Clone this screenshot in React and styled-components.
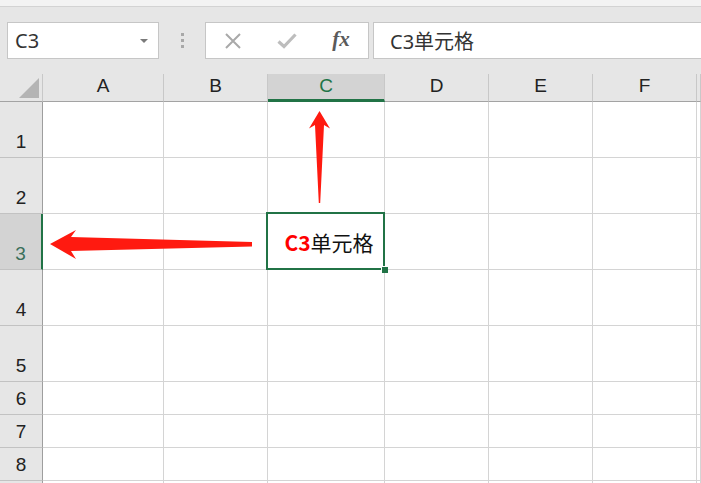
import React from 'react'
import styled, { createGlobalStyle, css } from 'styled-components'

const GlobalStyle = createGlobalStyle`
  html, body {
    margin: 0;
    padding: 0;
    background: #ffffff;
    overflow: hidden;
  }
  body {
    font-family: "Liberation Sans", "Noto Sans CJK SC", sans-serif;
  }
`

const Page = styled.div`
  position: relative;
  width: 701px;
  height: 483px;
  overflow: hidden;
  background: #ffffff;
`

const RibbonEdge = styled.div`
  height: 6px;
  background: #f3f3f3;
  border-bottom: 1px solid #d3d3d3;
`

const Toolbar = styled.div`
  display: flex;
  align-items: center;
  height: 67px;
  padding-left: 7px;
  background: #e6e6e6;
  box-sizing: border-box;
`

const boxStyle = css`
  height: 37px;
  box-sizing: border-box;
  background: #ffffff;
  border: 1px solid #c6c6c6;
  display: flex;
  align-items: center;
`

const NameBox = styled.div`
  ${boxStyle}
  width: 152px;
  padding: 0 10px 0 7px;
  justify-content: space-between;
  font-size: 20px;
  color: #333333;
  font-family: "Noto Sans", "Liberation Sans", sans-serif;
`

const Caret = styled.span`
  width: 0;
  height: 0;
  border-left: 4px solid transparent;
  border-right: 4px solid transparent;
  border-top: 4px solid #7a7a7a;
`

const Grip = styled.div`
  width: 46px;
  display: flex;
  flex-direction: column;
  align-items: center;
  gap: 3px;
  span {
    width: 3px;
    height: 3px;
    background: #a8a8a8;
  }
`

const ButtonsBox = styled.div`
  ${boxStyle}
  width: 164px;
  display: grid;
  grid-template-columns: repeat(3, 1fr);
  place-items: center;
`

const Fx = styled.span`
  font-family: "Liberation Serif", serif;
  font-style: italic;
  font-weight: bold;
  font-size: 21px;
  color: #5a5a5a;
  margin-top: -3px;
`

const FormulaBar = styled.div`
  ${boxStyle}
  flex: 1;
  margin-left: 4px;
  margin-right: -4px;
  padding-left: 16px;
  font-size: 20px;
  color: #333333;
  font-family: "Noto Sans", "Noto Sans CJK SC", sans-serif;
`

const Sheet = styled.div`
  display: grid;
  grid-template-columns: 43px 121px 104px 117px 104px 104px 104px 1fr;
  grid-template-rows: 28px repeat(5, 56px) repeat(4, 33px);
`

const Corner = styled.div`
  background: #e6e6e6;
  border-right: 1px solid #c8c8c8;
  border-bottom: 1px solid #a3a3a3;
  box-sizing: border-box;
  position: relative;
  &::after {
    content: '';
    position: absolute;
    right: 3px;
    bottom: 3px;
    width: 0;
    height: 0;
    border-left: 20px solid transparent;
    border-bottom: 20px solid #b4b4b4;
  }
`

const ColHead = styled.div`
  box-sizing: border-box;
  background: ${p => (p.$active ? '#d3d3d3' : '#e6e6e6')};
  border-right: 1px solid #c8c8c8;
  border-bottom: ${p => (p.$active ? '3px solid #217346' : '1px solid #a3a3a3')};
  color: ${p => (p.$active ? '#217346' : '#222222')};
  font-size: 19px;
  display: flex;
  justify-content: center;
  align-items: flex-end;
  padding-bottom: ${p => (p.$active ? '2px' : '4px')};
`

const RowHead = styled.div`
  box-sizing: border-box;
  background: ${p => (p.$active ? '#d3d3d3' : '#e6e6e6')};
  border-right: ${p => (p.$active ? '2px solid #217346' : '1px solid #9e9e9e')};
  border-bottom: 1px solid #c2c2c2;
  color: ${p => (p.$active ? '#3a6f5a' : '#222222')};
  font-size: 19px;
  display: flex;
  justify-content: center;
  align-items: flex-end;
  padding-bottom: 4px;
`

const Cell = styled.div`
  box-sizing: border-box;
  border-right: 1px solid #d4d4d4;
  border-bottom: 1px solid #d4d4d4;
  background: #ffffff;
  position: relative;
  ${p =>
    p.$selected &&
    css`
      z-index: 1;
      display: flex;
      align-items: center;
      justify-content: center;
      padding-left: 6px;
      padding-top: 1px;
      font-family: "Noto Sans CJK SC", "Noto Sans", sans-serif;
      font-size: 21px;
      color: #111111;
      &::before {
        content: '';
        position: absolute;
        left: -2px;
        top: -2px;
        right: -1px;
        bottom: -1px;
        border: 2px solid #217346;
        pointer-events: none;
      }
      &::after {
        content: '';
        position: absolute;
        right: -4px;
        bottom: -4px;
        width: 6px;
        height: 6px;
        background: #217346;
        border-left: 1px solid #ffffff;
        border-top: 1px solid #ffffff;
      }
    `}
`

const Red = styled.b`
  color: #ff0000;
  font-weight: bold;
`

const Arrows = styled.svg`
  position: absolute;
  left: 0;
  top: 0;
  z-index: 2;
  pointer-events: none;
`

const columns = ['A', 'B', 'C', 'D', 'E', 'F', 'G']
const rows = [1, 2, 3, 4, 5, 6, 7, 8, 9]

const App = () => {
  return (
    <Page>
      <GlobalStyle />
      <RibbonEdge />
      <Toolbar>
        <NameBox>
          <span>C3</span>
          <Caret />
        </NameBox>
        <Grip>
          <span />
          <span />
          <span />
        </Grip>
        <ButtonsBox>
          <svg width="18" height="18" viewBox="0 0 18 18">
            <path d="M2 2 L16 16 M16 2 L2 16" stroke="#a9a9a9" strokeWidth="2" fill="none" />
          </svg>
          <svg width="20" height="16" viewBox="0 0 20 16">
            <path d="M1.5 8.5 L7 13.5 L18.5 1.5" stroke="#bdbdbd" strokeWidth="3.2" fill="none" />
          </svg>
          <Fx>fx</Fx>
        </ButtonsBox>
        <FormulaBar>C3单元格</FormulaBar>
      </Toolbar>
      <Sheet>
        <Corner />
        {columns.map(c => (
          <ColHead key={c} $active={c === 'C'}>
            {c === 'G' ? '' : c}
          </ColHead>
        ))}
        {rows.map(r => (
          <React.Fragment key={r}>
            <RowHead $active={r === 3}>{r < 9 ? r : ''}</RowHead>
            {columns.map(c => {
              const selected = r === 3 && c === 'C'
              return (
                <Cell key={c} $selected={selected}>
                  {selected && (
                    <>
                      <Red>C3</Red>单元格
                    </>
                  )}
                </Cell>
              )
            })}
          </React.Fragment>
        ))}
      </Sheet>
      <Arrows width="701" height="483" viewBox="0 0 701 483">
        <polygon
          points="319.5,111 330,128.5 324,125 320.2,203 318.8,203 315,125 309,128.5"
          fill="#ff1a10"
        />
        <polygon
          points="50,244 76,230 71,237 252,242 252,246.5 71,251 76,259"
          fill="#ff1a10"
        />
      </Arrows>
    </Page>
  )
}

export default App
